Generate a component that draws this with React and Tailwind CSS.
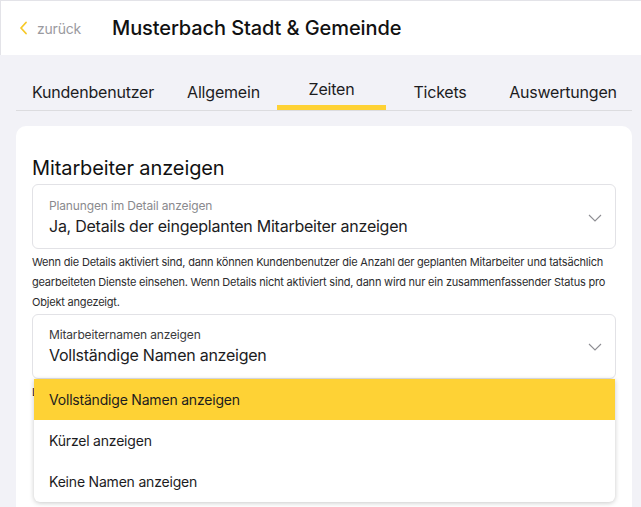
import { useState } from 'react'

const tabs = [
  { label: 'Kundenbenutzer', width: 'w-[154px]' },
  { label: 'Allgemein', width: 'w-[107px]' },
  { label: 'Zeiten', width: 'w-[109px]' },
  { label: 'Tickets', width: 'w-[108px]' },
  { label: 'Auswertungen', width: 'flex-1' },
]

const nameOptions = ['Vollständige Namen anzeigen', 'Kürzel anzeigen', 'Keine Namen anzeigen']

function Chevron() {
  return (
    <svg className="w-[14px] h-[8px] text-[#8e8e93]" viewBox="0 0 14 8" fill="none" stroke="currentColor" strokeWidth={1.1}>
      <path d="M1 1l6 6 6-6" />
    </svg>
  )
}

function App() {
  const [activeTab, setActiveTab] = useState('Zeiten')
  const [names, setNames] = useState(nameOptions[0])

  return (
    <div className="min-h-screen bg-[#f2f2f7] font-['Inter','Noto_Sans',sans-serif]">
      {/* Header */}
      <header className="h-[55px] bg-white border-t border-l border-[#e3e3e8] flex items-center">
        <button className="flex items-center pl-[18px] w-[111px] text-[14px] text-[#9a9aa0] tracking-[-0.2px]">
          <svg className="w-[9px] h-[14px] text-[#f7c928] mr-[9px]" viewBox="0 0 9 14" fill="none" stroke="currentColor" strokeWidth={1.8} strokeLinecap="round" strokeLinejoin="round">
            <path d="M7 1.5L2 7l5 5.5" />
          </svg>
          zurück
        </button>
        <h1 className="text-[20px] font-medium text-[#111] tracking-[-0.1px]">Musterbach Stadt &amp; Gemeinde</h1>
      </header>

      {/* Tabs */}
      <nav className="ml-4 mr-[9px] flex border-b border-[#dcdcdf]">
        {tabs.map((t) => {
          const active = t.label === activeTab
          return (
            <button
              key={t.label}
              onClick={() => setActiveTab(t.label)}
              className={`${t.width} h-[55px] text-[16px] leading-6 text-[#1c1c1e] tracking-[-0.2px] ${active ? 'pt-[17px] border-b-[5px] border-[#fed235]' : 'pt-[18px]'}`}
            >
              <span className="block text-center">{t.label}</span>
            </button>
          )
        })}
      </nav>

      {/* Card */}
      <main className="ml-4 mr-[9px] mt-[15px] bg-white rounded-[10px] px-4 pt-[28px] pb-[120px]">
        <h2 className="text-[20px] leading-7 text-[#111] tracking-[-0.1px] mb-[2px]">Mitarbeiter anzeigen</h2>

        <div className="border border-[#e2e2e6] rounded-md pl-4 pr-[13px] pt-[13px] pb-[10px] flex items-center">
          <div className="flex-1">
            <div className="text-[12px] leading-4 text-[#8a8a8e] tracking-[-0.15px]">Planungen im Detail anzeigen</div>
            <div className="text-[16px] leading-6 text-[#1c1c1e] tracking-[-0.25px]">Ja, Details der eingeplanten Mitarbeiter anzeigen</div>
          </div>
          <Chevron />
        </div>

        <p className="mt-[3px] text-[11px] leading-5 text-[#2c2c2e] tracking-[-0.2px]">
          Wenn die Details aktiviert sind, dann können Kundenbenutzer die Anzahl der geplanten Mitarbeiter und tatsächlich gearbeiteten Dienste einsehen. Wenn Details nicht aktiviert sind, dann wird nur ein zusammenfassender Status pro Objekt angezeigt.
        </p>

        <div className="relative mt-[2px]">
          <div className="border border-[#e2e2e6] rounded-md pl-4 pr-[13px] pt-[12px] pb-[11px] flex items-center">
            <div className="flex-1">
              <div className="text-[12px] leading-4 text-[#3a3a3c] tracking-[-0.15px]">Mitarbeiternamen anzeigen</div>
              <div className="text-[16px] leading-6 text-[#1c1c1e] tracking-[-0.25px]">{names}</div>
            </div>
            <Chevron />
          </div>

          {/* Open dropdown */}
          <ul className="absolute top-full left-[2px] right-[1px] bg-white rounded-b-md shadow-[0_1px_5px_rgba(0,0,0,0.22)] overflow-hidden z-10">
            {nameOptions.map((o) => (
              <li
                key={o}
                onClick={() => setNames(o)}
                className={`h-[41px] flex items-center pl-[15px] text-[14px] text-[#1c1c1e] tracking-[-0.2px] ${o === names ? 'bg-[#fed235]' : ''}`}
              >
                {o}
              </li>
            ))}
          </ul>
        </div>

        <p className="mt-[3px] text-[11px] leading-5 text-[#2c2c2e] tracking-[-0.2px]">
          Legt fest, wie die Namen der Mitarbeiter für Kundenbenutzer angezeigt werden.
        </p>
      </main>
    </div>
  )
}

export default App
